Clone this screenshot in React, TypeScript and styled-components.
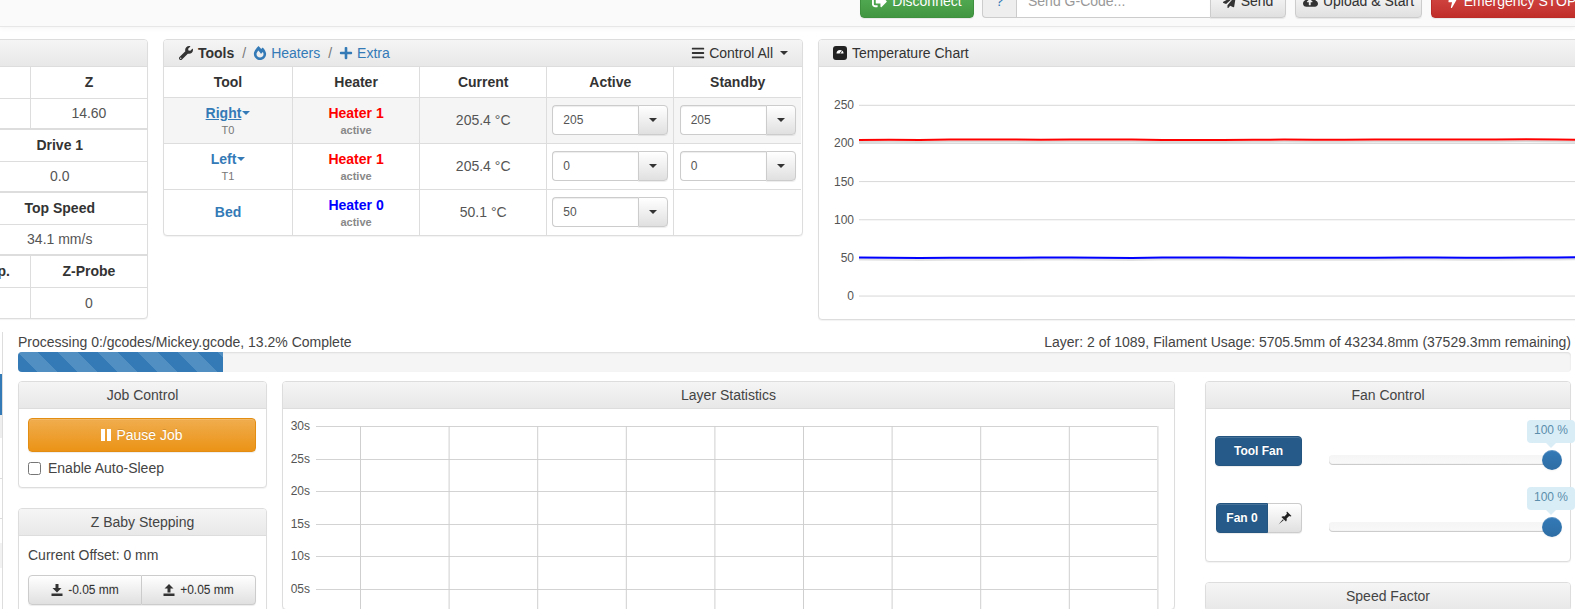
import React from 'react';
import styled, { createGlobalStyle } from 'styled-components';
import { FaBars, FaBolt, FaCloudUploadAlt, FaFireAlt, FaPaperPlane, FaPlus, FaSignOutAlt, FaWrench } from 'react-icons/fa';

const GlobalStyle = createGlobalStyle`
    html, body {
        margin: 0;
        padding: 0;
        background: #fff;
    }
    body {
        font-family: "Liberation Sans", Arial, sans-serif;
        font-size: 14px;
        line-height: 20px;
        color: #444;
    }
    * {
        box-sizing: border-box;
    }
`;

const Page = styled.div`
    width: 1575px;
    height: 609px;
    overflow: hidden;
`;

const Navbar = styled.div`
    display: flex;
    justify-content: flex-end;
    align-items: flex-end;
    height: 27px;
    padding-bottom: 8px;
    background: #fafafa;
    border-bottom: 1px solid #e7e7e7;
    box-shadow: 0 1px 5px rgba(0, 0, 0, .05);
`;

const Toolbar = styled.div`
    display: flex;
    align-items: flex-end;
    gap: 9px;
    margin-right: -16px;
    > :first-child {
        margin-right: -1px;
    }
`;

const variants = {
    green: 'background: linear-gradient(#5cb85c, #419641); border-color: #3e8f3e; color: #fff;',
    red: 'background: linear-gradient(#d9534f, #c12e2a); border-color: #b92c28; color: #fff;',
    orange: 'background: linear-gradient(#f0ad4e, #eb9316); border-color: #e38d13; color: #fff;',
    grey: 'background: linear-gradient(#fff, #e0e0e0); border-color: #ccc; color: #333;',
    navy: 'background: #265a88; border-color: #245580; color: #fff;',
};

const Button = styled.button<{ $kind: keyof typeof variants; $w?: number; $h?: number; $size?: number; $bold?: boolean }>`
    display: inline-flex;
    align-items: center;
    justify-content: center;
    gap: 5px;
    width: ${props => props.$w ? props.$w + 'px' : 'auto'};
    height: ${props => props.$h || 34}px;
    padding: 0;
    border: 1px solid;
    border-radius: 4px;
    font-family: inherit;
    font-size: ${props => props.$size || 14}px;
    font-weight: ${props => props.$bold ? 700 : 400};
    text-shadow: 0 -1px 0 rgba(0, 0, 0, .12);
    box-shadow: inset 0 1px 0 rgba(255, 255, 255, .15), 0 1px 1px rgba(0, 0, 0, .075);
    ${props => variants[props.$kind]}
`;

const CodeGroup = styled.div`
    display: flex;
    align-items: flex-end;
    height: 34px;
`;

const CodeHelp = styled.span`
    display: flex;
    align-items: center;
    justify-content: center;
    width: 34px;
    height: 34px;
    background: #eee;
    border: 1px solid #ccc;
    border-right: 0;
    border-radius: 4px 0 0 4px;
    color: #337ab7;
`;

const CodeInput = styled.input`
    width: 194px;
    height: 34px;
    padding: 6px 11px;
    border: 1px solid #ccc;
    border-right: 0;
    font-family: inherit;
    font-size: 14px;
    &::placeholder {
        color: #999;
    }
`;

const SendButton = styled(Button)`
    border-radius: 0 4px 4px 0;
`;

const TopRow = styled.div`
    display: flex;
    align-items: flex-start;
    gap: 15px;
    padding-top: 12px;
`;

const Panel = styled.section<{ $w?: number; $h?: number; $shift?: number }>`
    flex: none;
    width: ${props => props.$w ? props.$w + 'px' : 'auto'};
    height: ${props => props.$h ? props.$h + 'px' : 'auto'};
    margin-left: ${props => props.$shift || 0}px;
    background: #fff;
    border: 1px solid #ddd;
    border-radius: 4px;
    box-shadow: 0 1px 1px rgba(0, 0, 0, .05);
`;

const PanelHead = styled.div<{ $center?: boolean }>`
    display: flex;
    align-items: center;
    justify-content: ${props => props.$center ? 'center' : 'space-between'};
    height: 27px;
    padding: 0 14px;
    background: linear-gradient(#f5f5f5, #e8e8e8);
    border-bottom: 1px solid #ddd;
    border-radius: 3px 3px 0 0;
`;

const Crumbs = styled.div`
    display: flex;
    align-items: center;
    gap: 5px;
    color: #333;
    > svg {
        font-size: 14px;
    }
`;

const WrenchIcon = styled(FaWrench)`
    margin: 0 -1px 0 1px;
`;

const CrumbCurrent = styled.b`
    margin-left: 1px;
`;

const CrumbSep = styled.span`
    margin: 0 2px 0 3px;
    color: #777;
`;

const CrumbLink = styled.a`
    display: inline-flex;
    align-items: center;
    gap: 4px;
    color: #337ab7;
`;

const HeadAction = styled.div`
    display: flex;
    align-items: center;
    gap: 4px;
    color: #333;
`;

const Caret = styled.span<{ $color?: string }>`
    display: inline-block;
    width: 0;
    height: 0;
    border-top: 4px solid ${props => props.$color || '#333'};
    border-left: 4px solid transparent;
    border-right: 4px solid transparent;
`;

const HeadCaret = styled(Caret)`
    margin-left: 3px;
`;

const Table = styled.table`
    width: 100%;
    table-layout: fixed;
    border-collapse: collapse;
    th, td {
        padding: 0;
        text-align: center;
        vertical-align: middle;
        border-top: 1px solid #ddd;
        border-left: 1px solid #ddd;
    }
    th {
        color: #333;
    }
    td {
        color: #555;
    }
    thead th {
        border-top: 0;
    }
    th:first-child, td:first-child {
        border-left: 0;
    }
`;

const StatusTable = styled(Table)`
    tr {
        height: 31px;
    }
    tbody + tbody tr:first-child th {
        border-top: 2px solid #ddd;
        height: 32px;
    }
`;

const ToolsTable = styled(Table)`
    width: 637px;
    thead tr {
        height: 30px;
    }
    thead th:first-child {
        width: 128.5px;
    }
    tbody tr {
        height: 46px;
    }
`;

const ToolRow = styled.tr<{ $active?: boolean }>`
    background: ${props => props.$active ? '#f5f5f5' : 'transparent'};
`;

const ToolName = styled.a<{ $active?: boolean }>`
    display: inline-flex;
    align-items: center;
    gap: 1px;
    font-weight: 700;
    line-height: 16px;
    color: #337ab7;
    text-decoration: ${props => props.$active ? 'underline' : 'none'};
`;

const SmallLine = styled.div`
    font-size: 11px;
    line-height: 14px;
    color: #777;
`;

const HeaterName = styled.div<{ $color: string }>`
    font-weight: 700;
    line-height: 20px;
    color: ${props => props.$color};
`;

const HeaterState = styled(SmallLine)`
    font-weight: 700;
    color: #888;
`;

const TempGroup = styled.div`
    display: flex;
    width: 116px;
    height: 30px;
    margin: 0 auto;
`;

const TempInput = styled.div`
    flex: 1;
    padding-left: 10px;
    background: #fff;
    border: 1px solid #ccc;
    border-right: 0;
    border-radius: 4px 0 0 4px;
    font-size: 12px;
    line-height: 28px;
    text-align: left;
    color: #555;
    box-shadow: inset 0 1px 1px rgba(0, 0, 0, .075);
`;

const TempDrop = styled(Button)`
    border-radius: 0 4px 4px 0;
`;

const ChartSvg = styled.svg`
    display: block;
    text {
        font-family: "Liberation Sans", Arial, sans-serif;
        font-size: 12px;
        fill: #545454;
    }
`;

const Lower = styled.div`
    display: flex;
    margin-top: 11px;
`;

const Sidebar = styled.nav`
    flex: none;
    display: flex;
    flex-direction: column;
    width: 3px;
    height: 280px;
    margin-top: 1px;
    padding-top: 1px;
    border-right: 1px solid #ddd;
`;

const SideItem = styled.div<{ $h: number; $color: string }>`
    height: ${props => props.$h}px;
    background: ${props => props.$color};
`;

const Main = styled.div`
    flex: 1;
    min-width: 0;
    padding: 0 4px 0 15px;
`;

const ProgressText = styled.div`
    display: flex;
    justify-content: space-between;
    height: 21px;
    padding-top: 1px;
`;

const Progress = styled.div`
    height: 20px;
    margin-bottom: 9px;
    background: #f5f5f5;
    border-radius: 4px;
    overflow: hidden;
    box-shadow: inset 0 1px 2px rgba(0, 0, 0, .1);
`;

const ProgressFill = styled.div`
    height: 100%;
    background-color: #337ab7;
    background-image: linear-gradient(45deg, rgba(255, 255, 255, .15) 25%, transparent 25%, transparent 50%, rgba(255, 255, 255, .15) 50%, rgba(255, 255, 255, .15) 75%, transparent 75%, transparent);
    background-size: 40px 40px;
`;

const Columns = styled.div`
    display: grid;
    grid-template-columns: 249px 893px 366px;
    column-gap: 15px;
    > :last-child {
        margin-left: 15px;
        width: 366px;
    }
    align-items: start;
`;

const Stack = styled.div`
    display: flex;
    flex-direction: column;
    gap: 20px;
`;

const PanelBody = styled.div`
    padding: 9px 9px 9px;
`;

const CheckRow = styled.label`
    display: flex;
    align-items: center;
    gap: 7px;
    margin-top: 6px;
    height: 20px;
    input {
        width: 13px;
        height: 13px;
        margin: 0;
    }
`;

const ButtonPair = styled.div`
    display: flex;
    margin-top: 10px;
    button:first-child {
        border-radius: 4px 0 0 4px;
    }
    button:last-child {
        border-radius: 0 4px 4px 0;
        border-left: 0;
    }
`;

const FanBody = styled.div`
    display: flex;
    flex-direction: column;
    gap: 33px;
    padding: 27px 9px 24px;
`;

const FanRow = styled.div`
    display: flex;
    align-items: flex-start;
`;

const FanLabel = styled.div`
    flex: none;
    display: flex;
    justify-content: flex-end;
    width: 87px;
    button:first-child:not(:last-child) {
        border-radius: 4px 0 0 4px;
    }
    button:last-child:not(:first-child) {
        border-radius: 0 4px 4px 0;
        border-left: 0;
    }
`;

const Slider = styled.div`
    position: relative;
    flex: none;
    width: 232px;
    height: 20px;
    margin: 14px 0 0 27px;
    padding-top: 5px;
`;

const SliderTrack = styled.div`
    height: 10px;
    background: linear-gradient(#f5f5f5, #f9f9f9);
    border-radius: 4px;
    box-shadow: inset 0 -1px 1px rgba(0, 0, 0, .2);
`;

const SliderKnob = styled.div`
    position: absolute;
    left: 213px;
    top: 0;
    width: 20px;
    height: 20px;
    background: linear-gradient(#337ab7, #2e6da4);
    border-radius: 50%;
    box-shadow: inset 0 1px 0 rgba(255, 255, 255, .2), 0 1px 2px rgba(0, 0, 0, .05);
`;

const SliderTip = styled.div`
    position: absolute;
    left: 198px;
    top: -30px;
    width: 48px;
    height: 23px;
    background: #d9edf7;
    border-radius: 4px;
    font-size: 12px;
    line-height: 21px;
    text-align: center;
    color: #5b8eab;
    &::after {
        content: "";
        position: absolute;
        left: 19px;
        top: 23px;
        border-top: 5px solid #d9edf7;
        border-left: 5px solid transparent;
        border-right: 5px solid transparent;
    }
`;

const GaugeIcon: React.FC = () => (
    <svg width="14" height="14" viewBox="0 0 14 14">
        <rect x="0" y="0" width="14" height="14" rx="3" fill="#222" />
        <path d="M3.5 7.5 A3.5 3.5 0 0 1 10.5 7.5 Z" fill="#fff" />
        <path d="M6.4 7.5 L9.6 3.6 L7.8 7.5 Z" fill="#222" />
    </svg>
);

const TrayIcon: React.FC<{ up?: boolean }> = ({ up }) => (
    <svg width="12" height="12" viewBox="0 0 12 12" fill="#333">
        <rect x="0.5" y="9.5" width="11" height="2.5" />
        <path d={up ? 'M6 0 L10.5 4.5 H7.5 V8.5 H4.5 V4.5 H1.5 Z' : 'M4.5 0 H7.5 V4 H10.5 L6 8.5 L1.5 4 H4.5 Z'} />
    </svg>
);

const PinIcon: React.FC = () => (
    <svg width="14" height="14" viewBox="0 0 14 14" fill="#222">
        <path d="M9 0.5 L13.5 5 L12.3 5.6 L11.2 5 L8.6 7.6 C9 9 8.6 10 8 10.6 L3.4 6 C4 5.4 5 5 6.4 5.4 L9 2.8 L8.4 1.7 Z" />
        <path d="M5 8.2 L0.5 13.5 L5.8 9 Z" />
    </svg>
);

const PauseIcon: React.FC = () => (
    <svg width="10" height="12" viewBox="0 0 10 12" fill="#fff">
        <rect x="0" y="0" width="4" height="12" />
        <rect x="6" y="0" width="4" height="12" />
    </svg>
);

// y position of each sample on the temperature chart, a few pixels of wobble only
const redLine = [73, 72.8, 72.9, 72.5, 72.6, 72.5, 72.7, 72.6, 72.4, 72.6, 73, 73.1, 72.9, 72.8, 72.6, 72.8, 72.7, 72.6, 72.6, 72.5, 72.6, 72.4, 72.3, 72.5, 72.8];
const blueLine = [190.4, 190.8, 190.9, 190.8, 190.8, 190.7, 190.5, 190.4, 190.8, 190.9, 190.5, 190.4, 190.6, 190.8, 190.7, 190.8, 190.8, 190.7, 190.5, 190.6, 190.8, 190.8, 190.5, 190.4, 190.3];

const toPoints = (values: number[], from: number, width: number) =>
    values.map((y, i) => `${from + (i * width) / (values.length - 1)},${y}`).join(' ');

const TemperatureChart: React.FC = () => {
    const ticks = [250, 200, 150, 100, 50, 0];
    return (
        <ChartSvg width="768" height="251" viewBox="0 0 768 251">
            {ticks.map((tick, i) => {
                const y = 38.3 + i * 38.15;
                return (
                    <g key={tick}>
                        <line x1="40" x2="768" y1={y} y2={y} stroke="#d8d8d8" />
                        <text x="35" y={y + 4} textAnchor="end">{tick}</text>
                    </g>
                );
            })}
            <polyline points={toPoints(redLine, 40, 728)} transform="translate(0 2)" fill="none" stroke="rgba(0,0,0,.15)" strokeWidth="2" />
            <polyline points={toPoints(redLine, 40, 728)} fill="none" stroke="#ff0000" strokeWidth="2" />
            <polyline points={toPoints(blueLine, 40, 728)} transform="translate(0 2)" fill="none" stroke="rgba(0,0,0,.12)" strokeWidth="2" />
            <polyline points={toPoints(blueLine, 40, 728)} fill="none" stroke="#0000ff" strokeWidth="2" />
        </ChartSvg>
    );
};

const LayerChart: React.FC = () => {
    const ticks = ['30s', '25s', '20s', '15s', '10s', '05s'];
    const columns = Array.from({ length: 10 }, (_, i) => 77.5 + i * 88.6);
    return (
        <ChartSvg width="891" height="200" viewBox="0 0 891 200">
            {ticks.map((tick, i) => {
                const y = 17.5 + Math.round(i * 32.6);
                return (
                    <g key={tick}>
                        <line x1="33" x2="874" y1={y} y2={y} stroke="#d3d3d3" />
                        <text x="27" y={y + 3} textAnchor="end">{tick}</text>
                    </g>
                );
            })}
            {columns.map(x => (
                <line key={x} x1={x} x2={x} y1="17" y2="200" stroke="#cfcfcf" />
            ))}
        </ChartSvg>
    );
};

const TempControl: React.FC<{ value: number }> = ({ value }) => (
    <TempGroup>
        <TempInput>{value}</TempInput>
        <TempDrop $kind="grey" $w={30} $h={30}><Caret /></TempDrop>
    </TempGroup>
);

const Fan: React.FC<{ children: React.ReactNode }> = ({ children }) => (
    <FanRow>
        <FanLabel>{children}</FanLabel>
        <Slider>
            <SliderTrack />
            <SliderKnob />
            <SliderTip>100 %</SliderTip>
        </Slider>
    </FanRow>
);

const App: React.FC = () => {
    return (
        <Page>
            <GlobalStyle />
            <Navbar>
                <Toolbar>
                    <Button $kind="green" $w={114}><FaSignOutAlt size={15} />Disconnect</Button>
                    <CodeGroup>
                        <CodeHelp>?</CodeHelp>
                        <CodeInput placeholder="Send G-Code..." />
                        <SendButton $kind="grey" $w={76}><FaPaperPlane size={13} />Send</SendButton>
                    </CodeGroup>
                    <Button $kind="grey" $w={127}><FaCloudUploadAlt size={15} />Upload &amp; Start</Button>
                    <Button $kind="red" $w={160}><FaBolt size={13} />Emergency STOP</Button>
                </Toolbar>
            </Navbar>

            <TopRow>
                <Panel $w={352} $shift={-204}>
                    <PanelHead />
                    <StatusTable>
                        <colgroup>
                            <col /><col /><col /><col /><col /><col />
                        </colgroup>
                        <thead>
                            <tr><th colSpan={2} /><th colSpan={2} /><th colSpan={2}>Z</th></tr>
                        </thead>
                        <tbody>
                            <tr><td colSpan={2} /><td colSpan={2} /><td colSpan={2}>14.60</td></tr>
                        </tbody>
                        <tbody>
                            <tr><th colSpan={3} /><th colSpan={3}>Drive 1</th></tr>
                            <tr><td colSpan={3} /><td colSpan={3}>0.0</td></tr>
                        </tbody>
                        <tbody>
                            <tr><th colSpan={3} /><th colSpan={3}>Top Speed</th></tr>
                            <tr><td colSpan={3} /><td colSpan={3}>34.1 mm/s</td></tr>
                        </tbody>
                        <tbody>
                            <tr><th colSpan={2} /><th colSpan={2}>MCU Temp.</th><th colSpan={2}>Z-Probe</th></tr>
                            <tr><td colSpan={2} /><td colSpan={2} /><td colSpan={2}>0</td></tr>
                        </tbody>
                    </StatusTable>
                </Panel>

                <Panel $w={640}>
                    <PanelHead>
                        <Crumbs>
                            <WrenchIcon />
                            <CrumbCurrent>Tools</CrumbCurrent>
                            <CrumbSep>/</CrumbSep>
                            <CrumbLink><FaFireAlt />Heaters</CrumbLink>
                            <CrumbSep>/</CrumbSep>
                            <CrumbLink><FaPlus />Extra</CrumbLink>
                        </Crumbs>
                        <HeadAction><FaBars />Control All<HeadCaret /></HeadAction>
                    </PanelHead>
                    <ToolsTable>
                        <thead>
                            <tr><th>Tool</th><th>Heater</th><th>Current</th><th>Active</th><th>Standby</th></tr>
                        </thead>
                        <tbody>
                            <ToolRow $active>
                                <td>
                                    <ToolName $active>Right<Caret $color="#337ab7" /></ToolName>
                                    <SmallLine>T0</SmallLine>
                                </td>
                                <td>
                                    <HeaterName $color="#ff0000">Heater 1</HeaterName>
                                    <HeaterState>active</HeaterState>
                                </td>
                                <td>205.4 °C</td>
                                <td><TempControl value={205} /></td>
                                <td><TempControl value={205} /></td>
                            </ToolRow>
                            <ToolRow>
                                <td>
                                    <ToolName>Left<Caret $color="#337ab7" /></ToolName>
                                    <SmallLine>T1</SmallLine>
                                </td>
                                <td>
                                    <HeaterName $color="#ff0000">Heater 1</HeaterName>
                                    <HeaterState>active</HeaterState>
                                </td>
                                <td>205.4 °C</td>
                                <td><TempControl value={0} /></td>
                                <td><TempControl value={0} /></td>
                            </ToolRow>
                            <ToolRow>
                                <td><ToolName>Bed</ToolName></td>
                                <td>
                                    <HeaterName $color="#0000ff">Heater 0</HeaterName>
                                    <HeaterState>active</HeaterState>
                                </td>
                                <td>50.1 °C</td>
                                <td><TempControl value={50} /></td>
                                <td />
                            </ToolRow>
                        </tbody>
                    </ToolsTable>
                </Panel>

                <Panel $w={770} $h={281}>
                    <PanelHead>
                        <Crumbs><GaugeIcon />Temperature Chart</Crumbs>
                    </PanelHead>
                    <TemperatureChart />
                </Panel>
            </TopRow>

            <Lower>
                <Sidebar>
                    <SideItem $h={41} $color="transparent" />
                    <SideItem $h={41} $color="#337ab7" />
                    <SideItem $h={23} $color="#eee" />
                    <SideItem $h={40} $color="transparent" />
                    <SideItem $h={1} $color="#ddd" />
                    <SideItem $h={39} $color="transparent" />
                    <SideItem $h={1} $color="#ddd" />
                    <SideItem $h={24} $color="transparent" />
                    <SideItem $h={25} $color="#f2f2f2" />
                </Sidebar>
                <Main>
                    <ProgressText>
                        <span>Processing 0:/gcodes/Mickey.gcode, 13.2% Complete</span>
                        <span>Layer: 2 of 1089, Filament Usage: 5705.5mm of 43234.8mm (37529.3mm remaining)</span>
                    </ProgressText>
                    <Progress>
                        <ProgressFill style={{ width: '13.2%' }} />
                    </Progress>
                    <Columns>
                        <Stack>
                            <Panel>
                                <PanelHead $center>Job Control</PanelHead>
                                <PanelBody>
                                    <Button $kind="orange" $w={228}><PauseIcon />Pause Job</Button>
                                    <CheckRow><input type="checkbox" />Enable Auto-Sleep</CheckRow>
                                </PanelBody>
                            </Panel>
                            <Panel>
                                <PanelHead $center>Z Baby Stepping</PanelHead>
                                <PanelBody>
                                    Current Offset: 0 mm
                                    <ButtonPair>
                                        <Button $kind="grey" $w={114} $h={30} $size={12}><TrayIcon />-0.05 mm</Button>
                                        <Button $kind="grey" $w={114} $h={30} $size={12}><TrayIcon up />+0.05 mm</Button>
                                    </ButtonPair>
                                </PanelBody>
                            </Panel>
                        </Stack>
                        <Panel>
                            <PanelHead $center>Layer Statistics</PanelHead>
                            <LayerChart />
                        </Panel>
                        <Stack>
                            <Panel>
                                <PanelHead $center>Fan Control</PanelHead>
                                <FanBody>
                                    <Fan><Button $kind="navy" $w={87} $h={30} $size={12} $bold>Tool Fan</Button></Fan>
                                    <Fan>
                                        <Button $kind="navy" $w={52} $h={30} $size={12} $bold>Fan 0</Button>
                                        <Button $kind="grey" $w={34} $h={30}><PinIcon /></Button>
                                    </Fan>
                                </FanBody>
                            </Panel>
                            <Panel>
                                <PanelHead $center>Speed Factor</PanelHead>
                            </Panel>
                        </Stack>
                    </Columns>
                </Main>
            </Lower>
        </Page>
    );
};

export default App;
